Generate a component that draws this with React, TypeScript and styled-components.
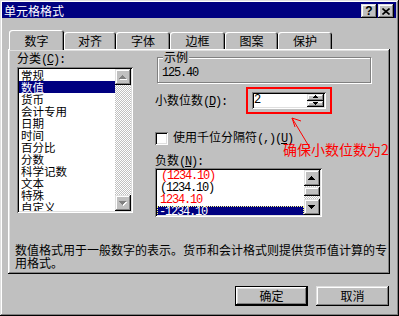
import React from "react";
import styled, { createGlobalStyle, css } from "styled-components";

const GlobalStyle = createGlobalStyle`
  html, body { margin: 0; padding: 0; background: #c0c0c0; }
  body {
    font-family: "Noto Sans CJK SC", "Noto Sans", sans-serif;
    font-size: 12px;
    color: #000;
  }
  * { box-sizing: border-box; }
`;

const raised = css`
  box-shadow: inset -1px -1px #000, inset 1px 1px #dfdfdf,
    inset -2px -2px #808080, inset 2px 2px #fff;
`;

const sunken = css`
  box-shadow: inset 1px 1px #808080, inset -1px -1px #fff,
    inset 2px 2px #000, inset -2px -2px #dfdfdf;
`;

const dither = css`
  background-color: #fff;
  background-image: conic-gradient(#c0c0c0 25%, #fff 0 50%, #c0c0c0 0 75%, #fff 0);
  background-size: 2px 2px;
`;

const mono = css`
  font-family: "Liberation Mono", monospace;
  font-size: 12px;
  letter-spacing: -1.2px;
`;

const Window = styled.div`
  position: relative;
  width: 399px;
  height: 316px;
  background: #c0c0c0;
  padding: 2px 3px 3px 2px;
  ${raised}
  display: flex;
  flex-direction: column;
`;

const TitleBar = styled.div`
  height: 16px;
  background: #000080;
  color: #fff;
  display: flex;
  align-items: center;
  padding: 2px 2px 0 2px;
`;

const TitleText = styled.span`
  flex: 1;
  font-size: 12px;
  line-height: 12px;
`;

const CaptionButtons = styled.div`
  display: flex;
  gap: 1px;
`;

const CaptionButton = styled.div`
  width: 16px;
  height: 14px;
  background: #c0c0c0;
  ${raised}
  display: flex;
  align-items: center;
  justify-content: center;
  color: #000;
  font-family: "Liberation Sans", Arial, sans-serif;
  font-weight: bold;
  font-size: 12px;
  line-height: 12px;
`;

const Body = styled.div`
  padding: 12px 6px 0 6px;
  display: flex;
  flex-direction: column;
`;

const TabStrip = styled.div`
  height: 19px;
  display: flex;
  align-items: flex-end;
  padding-left: 1px;
  position: relative;
  z-index: 1;
`;

const Tab = styled.div<{ $w: number; $active?: boolean }>`
  width: ${(p) => p.$w}px;
  height: ${(p) => (p.$active ? 20 : 17)}px;
  margin-bottom: ${(p) => (p.$active ? -1 : 0)}px;
  padding-top: ${(p) => (p.$active ? 5 : 3)}px;
  background: #c0c0c0;
  border-radius: 3px 3px 0 0;
  box-shadow: inset 1px 1px #fff, inset -1px 0 #000, inset -2px 0 #808080;
  text-align: center;
  line-height: 12px;
`;

const Panel = styled.div`
  height: 225px;
  background: #c0c0c0;
  box-shadow: inset -1px -1px #000, inset 1px 1px #fff,
    inset -2px -2px #808080, inset 2px 2px #dfdfdf;
  padding: 2px 2px 0 7px;
  display: flex;
  flex-direction: column;
`;

const Columns = styled.div`
  display: flex;
  gap: 22px;
  align-items: flex-start;
`;

const LeftCol = styled.div`
  margin-left: 2px;
  width: 116px;
  display: flex;
  flex-direction: column;
`;

const RightCol = styled.div`
  width: 216px;
  display: flex;
  flex-direction: column;
`;

const FieldLabel = styled.div<{ $mt?: number; $mb?: number }>`
  height: 14px;
  line-height: 14px;
  margin-top: ${(p) => p.$mt ?? 0}px;
  margin-bottom: ${(p) => p.$mb ?? 0}px;
  white-space: nowrap;
`;

const Lat = styled.span`
  ${mono}
`;

const Key = styled.span`
  text-decoration: underline;
`;

const ListBox = styled.div<{ $w: number; $h: number }>`
  width: ${(p) => p.$w}px;
  height: ${(p) => p.$h}px;
  background: #fff;
  ${sunken}
  padding: 2px;
  display: flex;
`;

const ListItems = styled.div`
  flex: 1;
  overflow: hidden;
`;

const ListItem = styled.div<{ $selected?: boolean; $color?: string; $mono?: boolean; $pl?: number }>`
  height: 12px;
  line-height: 12px;
  font-size: 11.5px;
  padding-left: ${(p) => p.$pl ?? 2}px;
  white-space: nowrap;
  background: ${(p) => (p.$selected ? "#000080" : "transparent")};
  color: ${(p) => (p.$selected ? "#fff" : p.$color ?? "#000")};
  ${(p) => p.$mono && mono}
  ${(p) =>
    p.$selected &&
    p.$mono &&
    css`
      outline: 1px dotted #ffff80;
      outline-offset: -1px;
    `}
`;

const ScrollBar = styled.div`
  width: 16px;
  display: flex;
  flex-direction: column;
`;

const ScrollButton = styled.div`
  height: 16px;
  flex: none;
  background: #c0c0c0;
  ${raised}
  display: flex;
  align-items: center;
  justify-content: center;
`;

const Track = styled.div`
  flex: 1;
  ${dither}
`;

const Thumb = styled.div`
  height: 9px;
  margin-top: 1px;
  background: #c0c0c0;
  ${raised}
`;

const Legend = styled.legend`
  padding: 0 1px;
  margin-left: 1px;
  line-height: 12px;
  height: 12px;
  background: #c0c0c0;
`;

const GroupBox = styled.fieldset`
  margin: 0 0 0 2px;
  width: 214px;
  min-width: 0;
  padding: 4px 4px 3px 4px;
  border: 1px solid #808080;
  box-shadow: inset 1px 1px #fff, 1px 1px #fff;
`;

const SampleText = styled.div`
  line-height: 12px;
  height: 12px;
  ${mono}
`;

const FieldRow = styled.div`
  display: flex;
  align-items: center;
  margin-top: 4px;
`;

const RowLabel = styled.span`
  width: 91px;
  line-height: 12px;
  white-space: nowrap;
`;

const Highlight = styled.div`
  border: 2px solid #ff0000;
  padding: 3px 4px;
`;

const SpinInput = styled.div`
  width: 74px;
  height: 17px;
  background: #fff;
  ${sunken}
  padding: 2px;
  display: flex;
`;

const SpinValue = styled.span`
  flex: 1;
  line-height: 13px;
  ${mono}
`;

const SpinButtons = styled.div`
  width: 17px;
  display: flex;
  flex-direction: column;
`;

const SpinButton = styled.div`
  flex: 1;
  background: #c0c0c0;
  ${raised}
  display: flex;
  align-items: center;
  justify-content: center;
`;

const CheckRow = styled.div`
  display: flex;
  align-items: center;
  gap: 5px;
  margin-top: 16px;
  line-height: 13px;
`;

const CheckBox = styled.div`
  width: 13px;
  height: 13px;
  background: #fff;
  ${sunken}
`;

const Description = styled.div`
  margin-top: 26px;
  width: 373px;
  line-height: 13px;
`;

const ButtonRow = styled.div`
  display: flex;
  justify-content: flex-end;
  gap: 8px;
  margin-top: 12px;
  padding-right: 1px;
`;

const DialogButton = styled.div<{ $default?: boolean }>`
  width: 73px;
  height: 20px;
  background: #c0c0c0;
  display: flex;
  align-items: center;
  justify-content: center;
  line-height: 12px;
  ${(p) =>
    p.$default
      ? css`
          box-shadow: inset 0 0 0 1px #000, inset -2px -2px #000,
            inset 2px 2px #fff, inset -3px -3px #808080, inset 3px 3px #dfdfdf;
        `
      : raised}
`;

const Annotation = styled.div`
  position: absolute;
  left: 283px;
  top: 143px;
  color: #ff0000;
  font-size: 14px;
  line-height: 13px;
  white-space: nowrap;
`;

const ArrowSvg = styled.svg`
  position: absolute;
  left: 288px;
  top: 114px;
`;

const Arrow: React.FC<{ dir: "up" | "down"; disabled?: boolean; small?: boolean }> = ({ dir, disabled, small }) => {
  const w = small ? 5 : 7;
  const h = small ? 3 : 4;
  const pts = dir === "up" ? `0,${h} ${w},${h} ${w / 2},0` : `0,0 ${w},0 ${w / 2},${h}`;
  return (
    <svg width={w + 1} height={h + 1} viewBox={`0 0 ${w + 1} ${h + 1}`} shapeRendering="crispEdges">
      {disabled && <polygon points={pts} fill="#fff" transform="translate(1,1)" />}
      <polygon points={pts} fill={disabled ? "#808080" : "#000"} />
    </svg>
  );
};

const categories = ["常规", "数值", "货币", "会计专用", "日期", "时间", "百分比", "分数", "科学记数", "文本", "特殊", "自定义"];

const negatives = [
  { t: "(1234.10)", c: "#ff0000", pl: 4 },
  { t: "(1234.10)", c: "#000", pl: 3 },
  { t: "1234.10", c: "#ff0000", pl: 3 },
  { t: "-1234.10", c: "#fff", pl: 2, sel: true },
];

const tabs = [
  { label: "数字", w: 55, active: true },
  { label: "对齐", w: 52 },
  { label: "字体", w: 54 },
  { label: "边框", w: 55 },
  { label: "图案", w: 53 },
  { label: "保护", w: 54 },
];

export default function App() {
  return (
    <>
      <GlobalStyle />
      <Window>
        <TitleBar>
          <TitleText>单元格格式</TitleText>
          <CaptionButtons>
            <CaptionButton>?</CaptionButton>
            <CaptionButton>
              <svg width="8" height="7" viewBox="0 0 8 7">
                <path d="M0.5 0.5 L7.5 6.5 M7.5 0.5 L0.5 6.5" stroke="#000" strokeWidth="1.6" />
              </svg>
            </CaptionButton>
          </CaptionButtons>
        </TitleBar>
        <Body>
          <TabStrip>
            {tabs.map((t) => (
              <Tab key={t.label} $w={t.w} $active={t.active}>
                {t.label}
              </Tab>
            ))}
          </TabStrip>
          <Panel>
            <Columns>
              <LeftCol>
                <FieldLabel $mb={2}>
                  分类<Lat>(<Key>C</Key>):</Lat>
                </FieldLabel>
                <ListBox $w={116} $h={146}>
                  <ListItems>
                    {categories.map((c) => (
                      <ListItem key={c} $selected={c === "数值"}>
                        {c}
                      </ListItem>
                    ))}
                  </ListItems>
                  <ScrollBar>
                    <ScrollButton>
                      <Arrow dir="up" disabled />
                    </ScrollButton>
                    <Track />
                    <ScrollButton>
                      <Arrow dir="down" disabled />
                    </ScrollButton>
                  </ScrollBar>
                </ListBox>
              </LeftCol>
              <RightCol>
                <GroupBox>
                  <Legend>示例</Legend>
                  <SampleText>125.40</SampleText>
                </GroupBox>
                <FieldRow>
                  <RowLabel>
                    小数位数<Lat>(<Key>D</Key>):</Lat>
                  </RowLabel>
                  <Highlight>
                    <SpinInput>
                      <SpinValue>2</SpinValue>
                      <SpinButtons>
                        <SpinButton>
                          <Arrow dir="up" small />
                        </SpinButton>
                        <SpinButton>
                          <Arrow dir="down" small />
                        </SpinButton>
                      </SpinButtons>
                    </SpinInput>
                  </Highlight>
                </FieldRow>
                <CheckRow>
                  <CheckBox />
                  <span>
                    使用千位分隔符<Lat>(,)(<Key>U</Key>)</Lat>
                  </span>
                </CheckRow>
                <FieldLabel $mt={7} $mb={1}>
                  负数<Lat>(<Key>N</Key>):</Lat>
                </FieldLabel>
                <ListBox $w={167} $h={49}>
                  <ListItems>
                    {negatives.map((n, i) => (
                      <ListItem key={i} $mono $color={n.c} $selected={n.sel} $pl={n.pl}>
                        {n.t}
                      </ListItem>
                    ))}
                  </ListItems>
                  <ScrollBar>
                    <ScrollButton>
                      <Arrow dir="up" />
                    </ScrollButton>
                    <Track>
                      <Thumb />
                    </Track>
                    <ScrollButton>
                      <Arrow dir="down" />
                    </ScrollButton>
                  </ScrollBar>
                </ListBox>
              </RightCol>
            </Columns>
            <Description>
              数值格式用于一般数字的表示。货币和会计格式则提供货币值计算的专用格式。
            </Description>
          </Panel>
          <ButtonRow>
            <DialogButton $default>确定</DialogButton>
            <DialogButton>取消</DialogButton>
          </ButtonRow>
        </Body>
        <ArrowSvg width="30" height="42" viewBox="0 0 30 42">
          <path d="M4 4 L22 34 M13 7 L4 4 L7 13" stroke="#ff0000" strokeWidth="1" fill="none" />
        </ArrowSvg>
        <Annotation>确保小数位数为2</Annotation>
      </Window>
    </>
  );
}
